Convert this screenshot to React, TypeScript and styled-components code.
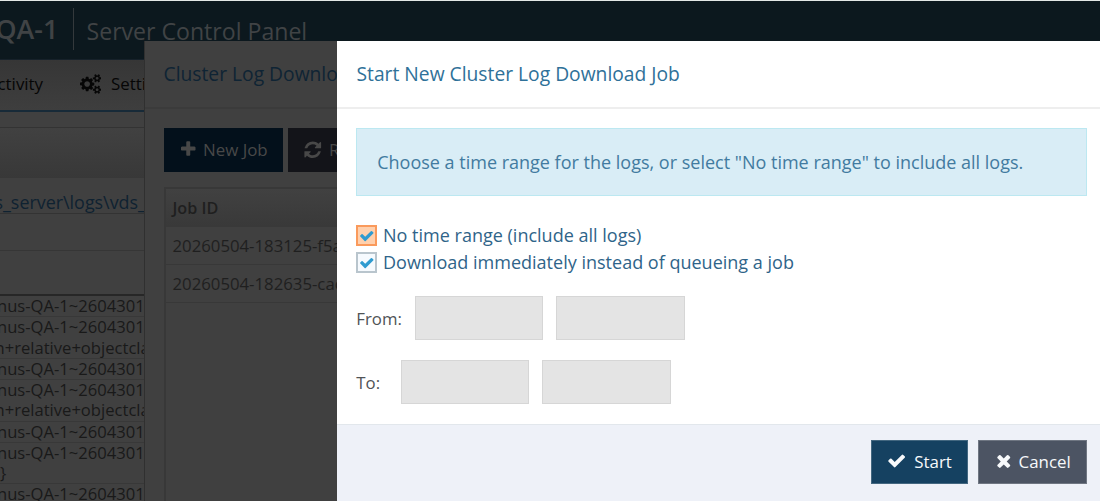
import React from "react";
import styled, { createGlobalStyle } from "styled-components";

const GlobalStyle = createGlobalStyle`
  * { box-sizing: border-box; }
  body { margin: 0; overflow: hidden; font-family: "Open Sans", "Noto Sans", sans-serif; }
`;

const icons = {
  check: "M1671 566q0 40-28 68l-724 724-136 136q-28 28-68 28t-68-28l-136-136-362-362q-28-28-28-68t28-68l136-136q28-28 68-28t68 28l294 295 656-657q28-28 68-28t68 28l136 136q28 28 28 68z",
  times: "M1490 1322q0 40-28 68l-136 136q-28 28-68 28t-68-28l-294-294-294 294q-28 28-68 28t-68-28l-136-136q-28-28-28-68t28-68l294-294-294-294q-28-28-28-68t28-68l136-136q28-28 68-28t68 28l294 294 294-294q28-28 68-28t68 28l136 136q28 28 28 68t-28 68l-294 294 294 294q28 28 28 68z",
  plus: "M1600 736v192q0 40-28 68t-68 28h-416v416q0 40-28 68t-68 28h-192q-40 0-68-28t-28-68v-416h-416q-40 0-68-28t-28-68v-192q0-40 28-68t68-28h416v-416q0-40 28-68t68-28h192q40 0 68 28t28 68v416h416q40 0 68 28t28 68z",
  refresh: "M1639 1056q0 5-1 7-64 268-268 434.5t-478 166.5q-146 0-282.5-55t-243.5-157l-129 129q-19 19-45 19t-45-19-19-45v-448q0-26 19-45t45-19h448q26 0 45 19t19 45-19 45l-137 137q71 66 161 102t187 36q134 0 250-65t186-179q11-17 53-117 8-23 30-23h192q13 0 22.5 9.5t9.5 22.5zm25-800v448q0 26-19 45t-45 19h-448q-26 0-45-19t-19-45 19-45l138-138q-148-137-349-137-134 0-250 65t-186 179q-11 17-53 117-8 23-30 23h-199q-13 0-22.5-9.5t-9.5-22.5v-7q65-268 270-434.5t480-166.5q146 0 284 55.5t245 156.5l130-129q19-19 45-19t45 19 19 45z",
  cogs: "M896 896q0-106-75-181t-181-75-181 75-75 181 75 181 181 75 181-75 75-181zm768 512q0-52-38-90t-90-38-90 38-38 90q0 53 37.5 90.5t90.5 37.5 90.5-37.5 37.5-90.5zm0-1024q0-52-38-90t-90-38-90 38-38 90q0 53 37.5 90.5t90.5 37.5 90.5-37.5 37.5-90.5zm-384 421v185q0 10-7 19.5t-16 10.5l-155 24q-11 35-32 76 34 48 90 115 7 11 7 20 0 12-7 19-23 30-82.5 89.5t-78.5 59.5q-11 0-21-7l-115-90q-37 19-77 31-11 108-23 155-7 24-30 24h-186q-11 0-20-7.5t-10-17.5l-23-153q-34-10-75-31l-118 89q-7 7-20 7-11 0-21-8-144-133-144-160 0-9 7-19 10-14 41-53t47-61q-23-44-35-82l-152-24q-10-1-17-9.5t-7-19.5v-185q0-10 7-19.5t16-10.5l155-24q11-35 32-76-34-48-90-115-7-11-7-20 0-12 7-20 22-30 82-89t79-59q11 0 21 7l115 90q34-18 77-32 11-108 23-154 7-24 30-24h186q11 0 20 7.5t10 17.5l23 153q34 10 75 31l118-89q8-7 20-7 11 0 21 8 144 133 144 160 0 8-7 19-12 16-42 54t-45 60q23 48 34 82l152 23q10 2 17 10.5t7 19.5zm640 533v140q0 16-149 31-12 27-30 52 51 113 51 138 0 4-4 7-122 71-124 71-8 0-46-47t-52-68q-20 2-30 2t-30-2q-14 21-52 68t-46 47q-2 0-124-71-4-3-4-7 0-25 51-138-18-25-30-52-149-15-149-31v-140q0-16 149-31 13-29 30-52-51-113-51-138 0-4 4-7 4-2 35-20t59-34 30-16q8 0 46 46.5t52 67.5q20-2 30-2t30 2q51-71 92-112l6-2q4 0 124 70 4 3 4 7 0 25-51 138 17 23 30 52 149 15 149 31zm0-1024v140q0 16-149 31-12 27-30 52 51 113 51 138 0 4-4 7-122 71-124 71-8 0-46-47t-52-68q-20 2-30 2t-30-2q-14 21-52 68t-46 47q-2 0-124-71-4-3-4-7 0-25 51-138-18-25-30-52-149-15-149-31v-140q0-16 149-31 13-29 30-52-51-113-51-138 0-4 4-7 4-2 35-20t59-34 30-16q8 0 46 46.5t52 67.5q20-2 30-2t30 2q51-71 92-112l6-2q4 0 124 70 4 3 4 7 0 25-51 138 17 23 30 52 149 15 149 31z",
};

const Svg = styled.svg`
  display: block;
  flex: none;
  fill: currentColor;
`;

function Icon({ name, size }: { name: keyof typeof icons; size: number }) {
  const vw = name === "cogs" ? 1920 : 1792;
  return (
    <Svg viewBox={`0 0 ${vw} 1792`} width={(size * vw) / 1792} height={size}>
      <path d={icons[name]} />
    </Svg>
  );
}

const Screen = styled.div`
  position: relative;
  width: 1100px;
  height: 501px;
  overflow: hidden;
  background: #404040;
`;

/* Page behind the dialogs, shown dimmed */
const Header = styled.header`
  display: flex;
  align-items: flex-start;
  height: 59px;
  border-top: 1px solid #e4e8e6;
  background: #0c181e;
  color: #404345;
  white-space: nowrap;
`;

const ServerName = styled.div`
  width: 73.5px;
  height: 42px;
  margin-top: 6.5px;
  padding-top: 3px;
  border-right: 1px solid #34393c;
  text-indent: -4.5px;
  font-size: 26.8px;
  font-weight: 600;
  line-height: 36px;
`;

const ProductName = styled.div`
  margin: 13px 0 0 13px;
  font-size: 23.1px;
  line-height: 34px;
`;

const Nav = styled.nav`
  display: flex;
  align-items: center;
  height: 53px;
  padding-bottom: 3px;
  border-top: 1px solid #16212a;
  border-bottom: 2px solid #172a38;
  background: linear-gradient(#363636, #3e3e3e);
  color: #060606;
  font-size: 16.9px;
  white-space: nowrap;
`;

const NavItem = styled.div`
  display: flex;
  align-items: center;
  gap: 9.5px;
  &:first-child { width: 80px; text-indent: -2.5px; }
`;

const PanelTop = styled.div`
  height: 15.5px;
  border-bottom: 1px solid #333;
`;

const PanelHead = styled.div`
  height: 50.5px;
  background: linear-gradient(#414141, #383838);
`;

const FilePath = styled.div`
  height: 36px;
  border-bottom: 1px solid #333;
  color: #0f2231;
  font-size: 17.9px;
  line-height: 48px;
  text-indent: -5.5px;
  white-space: nowrap;
`;

const FilterRow = styled.div`
  height: 37px;
  border-bottom: 1px solid #363636;
`;

const LogGap = styled.div`
  height: 45px;
  border-bottom: 2px solid #272727;
`;

const LogRow = styled.div<{ $lines: number }>`
  height: ${(p) => (p.$lines === 2 ? 41.65 : 21.15)}px;
  border-bottom: 1px solid #383838;
  color: #191919;
  font-size: 16.6px;
  line-height: 20.5px;
  white-space: nowrap;
`;

const LogLine = styled.div<{ $indent: number }>`
  text-indent: ${(p) => p.$indent}px;
`;

const Dialog = styled.section<{ $left: number; $dim?: boolean }>`
  position: absolute;
  top: 41px;
  bottom: 0;
  right: 0;
  left: ${(p) => p.$left}px;
  display: flex;
  flex-direction: column;
  background: ${(p) => (p.$dim ? "#404040" : "#fff")};
  border-left: ${(p) => (p.$dim ? "1px solid #303030" : "none")};
  white-space: nowrap;
`;

const DialogTitle = styled.h2<{ $dim?: boolean }>`
  flex: none;
  margin: 0;
  height: 68px;
  padding-left: ${(p) => (p.$dim ? 18.5 : 19.5)}px;
  border-bottom: 2px solid ${(p) => (p.$dim ? "#3b3b3b" : "#eeeeee")};
  color: ${(p) => (p.$dim ? "#0f2434" : "#2f7199")};
  font-size: 19.25px;
  font-weight: 400;
  line-height: 66px;
`;

const DialogBody = styled.div`
  flex: 1;
  padding: 19px 13.5px 0 19px;
`;

const Toolbar = styled.div`
  display: flex;
  gap: 5px;
`;

const Button = styled.button<{ $bg: string; $width: number; $gap?: number; $dim?: boolean }>`
  display: flex;
  align-items: center;
  gap: ${(p) => p.$gap ?? 7}px;
  width: ${(p) => p.$width}px;
  height: ${(p) => (p.$dim ? 43.5 : 44)}px;
  padding: 0 0 ${(p) => (p.$dim ? 1 : 2)}px ${(p) => (p.$dim ? 13.5 : 15)}px;
  border: 1px solid ${(p) => (p.$dim ? "transparent" : "rgba(255,255,255,0.2)")};
  background: ${(p) => p.$bg};
  color: ${(p) => (p.$dim ? "#484848" : "#f7f9fb")};
  font: 400 16.9px "Open Sans", sans-serif;
`;

const JobTable = styled.div`
  margin-top: 15.5px;
  height: 400px;
  border: 1px solid #383838;
  border-width: 2px 0 0 2px;
  color: #1f1f1f;
  font-size: 16.75px;
`;

const JobHead = styled.div`
  height: 38px;
  padding-left: 6.5px;
  border-bottom: 1px solid #393939;
  background: linear-gradient(#414141, #393939);
  font-size: 16.2px;
  font-weight: 600;
  line-height: 39px;
`;

const JobRow = styled.div`
  height: 38px;
  padding-left: 6.5px;
  border-bottom: 1px solid #383838;
  line-height: 37px;
`;

const Notice = styled.div`
  height: 68px;
  padding-left: 20.2px;
  border: 1px solid #bce8f1;
  background: #d9edf6;
  color: #427ba0;
  font-size: 18px;
  line-height: 67px;
`;

const Options = styled.div`
  display: flex;
  flex-direction: column;
  gap: 6px;
  margin-top: 29px;
`;

const Option = styled.label`
  display: flex;
  align-items: center;
  gap: 6px;
  height: 21px;
  color: #2f6489;
  font-size: 18.02px;
  line-height: 20px;
`;

const OptionText = styled.span`
  padding-bottom: 0.2px;
`;

const CheckBox = styled.span<{ $focus?: boolean }>`
  display: grid;
  place-items: center;
  width: 21px;
  height: 21px;
  border: ${(p) => (p.$focus ? "2px solid #fa9a5c" : "2px solid #b9c5cd")};
  background: ${(p) => (p.$focus ? "#ffd0ad" : "#f6fafe")};
  color: #2f9bd0;
`;

const DateRow = styled.div<{ $top: number; $label: number }>`
  display: grid;
  grid-template-columns: ${(p) => p.$label}px 128.5px 128.5px;
  column-gap: 12.7px;
  align-items: center;
  margin: ${(p) => p.$top}px 0 0 0.3px;
  color: #505356;
  font-size: 16.8px;
`;

const DateField = styled.input`
  width: 128.5px;
  height: 44px;
  border: 1px solid #d6d6d6;
  border-radius: 0;
  background: #e4e4e4;
`;

const DialogFooter = styled.footer`
  display: flex;
  flex: none;
  justify-content: flex-end;
  gap: 10px;
  height: 77px;
  padding: 15px 13.5px 0 0;
  border-top: 1px solid #e2e7ec;
  background: #eef1f8;
`;

const SERVER_LINE = "nus-QA-1~2604301";
const logs = [
  [SERVER_LINE],
  [SERVER_LINE, "n+relative+objectcla"],
  [SERVER_LINE],
  [SERVER_LINE, "n+relative+objectcla"],
  [SERVER_LINE],
  [SERVER_LINE, "}"],
  [SERVER_LINE],
];

const indentOf = (line: string) => (line === "}" ? 0 : line === SERVER_LINE ? -3 : -5.5);

export default function App() {
  return (
    <Screen>
      <GlobalStyle />
      <Header>
        <ServerName>QA-1</ServerName>
        <ProductName>Server Control Panel</ProductName>
      </Header>
      <Nav>
        <NavItem>ctivity</NavItem>
        <NavItem>
          <Icon name="cogs" size={20} />
          Setti
        </NavItem>
      </Nav>
      <PanelTop />
      <PanelHead />
      <FilePath>s_server\logs\vds_</FilePath>
      <FilterRow />
      <LogGap />
      {logs.map((lines, i) => (
        <LogRow key={i} $lines={lines.length}>
          {lines.map((line) => (
            <LogLine key={line} $indent={indentOf(line)}>{line}</LogLine>
          ))}
        </LogRow>
      ))}

      <Dialog $left={144} $dim>
        <DialogTitle $dim>Cluster Log Downlo</DialogTitle>
        <DialogBody>
          <Toolbar>
            <Button $bg="#03101b" $width={119} $gap={6} $dim><Icon name="plus" size={18.5} />New Job</Button>
            <Button $bg="#131419" $width={120} $gap={7} $dim><Icon name="refresh" size={19.5} />R</Button>
          </Toolbar>
          <JobTable>
            <JobHead>Job ID</JobHead>
            <JobRow>20260504-183125-f5a</JobRow>
            <JobRow>20260504-182635-cac</JobRow>
          </JobTable>
        </DialogBody>
      </Dialog>

      <Dialog $left={337}>
        <DialogTitle>Start New Cluster Log Download Job</DialogTitle>
        <DialogBody>
          <Notice>Choose a time range for the logs, or select "No time range" to include all logs.</Notice>
          <Options>
            <Option>
              <CheckBox $focus><Icon name="check" size={15.5} /></CheckBox>
              <OptionText>No time range (include all logs)</OptionText>
            </Option>
            <Option>
              <CheckBox><Icon name="check" size={15.5} /></CheckBox>
              <OptionText>Download immediately instead of queueing a job</OptionText>
            </Option>
          </Options>
          <DateRow $top={23} $label={46}>From:<DateField disabled /><DateField disabled /></DateRow>
          <DateRow $top={20} $label={32}>To:<DateField disabled /><DateField disabled /></DateRow>
        </DialogBody>
        <DialogFooter>
          <Button $bg="#154161" $width={97.5} $gap={8.5}><Icon name="check" size={19.3} />Start</Button>
          <Button $bg="#4c5463" $width={108.5} $gap={5}><Icon name="times" size={19.5} />Cancel</Button>
        </DialogFooter>
      </Dialog>
    </Screen>
  );
}
